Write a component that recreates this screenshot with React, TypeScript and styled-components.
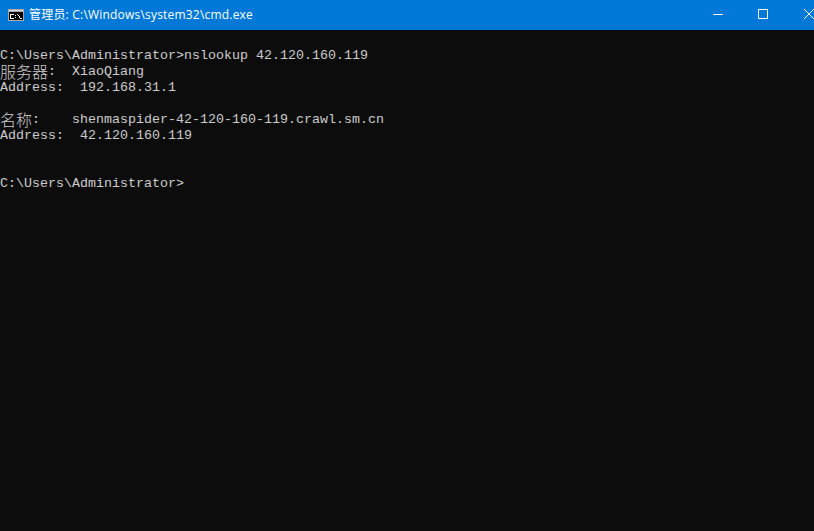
import { FC } from "react";
import styled, { createGlobalStyle } from "styled-components";

const GlobalStyle = createGlobalStyle`
  html, body {
    margin: 0;
    padding: 0;
    background: #0c0c0c;
  }
`;

const Window = styled.div`
  display: flex;
  flex-direction: column;
  width: 814px;
  height: 531px;
  overflow: hidden;
  background: #0c0c0c;
`;

const TitleBar = styled.div`
  display: flex;
  align-items: center;
  flex: 0 0 30px;
  height: 30px;
  background: #0078d7;
  color: #fff;
`;

const AppIcon = styled.svg`
  flex: 0 0 16px;
  margin-left: 8px;
`;

const Title = styled.div`
  flex: 1;
  margin-left: 5px;
  font-family: "Open Sans", "Noto Sans CJK SC", sans-serif;
  font-size: 12px;
  letter-spacing: 0.2px;
  line-height: 30px;
  white-space: nowrap;
`;

const Controls = styled.div`
  display: flex;
  flex: 0 0 136px;
  margin-right: -18px;
`;

const WindowButton = styled.div<{ $inset?: number }>`
  display: flex;
  align-items: center;
  box-sizing: border-box;
  width: 45px;
  height: 30px;
  padding-left: ${({ $inset }) => $inset ?? 17}px;
  padding-bottom: 2px;
`;

const Console = styled.pre`
  flex: 1;
  margin: 0;
  padding-top: 2px;
  color: #cccccc;
  font-family: "Liberation Mono", monospace;
  font-size: 13.33px;
`;

const Line = styled.div`
  display: flex;
  height: 16px;
  line-height: 16px;
  white-space: pre;
`;

const Cjk = styled.span`
  margin-top: -1px;
  font-family: "Noto Sans CJK SC", sans-serif;
  font-size: 16px;
  font-weight: 300;
  line-height: 16px;
`;

const App: FC = () => (
  <Window>
    <GlobalStyle />
    <TitleBar>
      <AppIcon width="16" height="12" viewBox="0 0 16 12" shapeRendering="crispEdges">
        <rect width="16" height="12" fill="#a8a8a8" />
        <rect x="1" y="1" width="14" height="1" fill="#d8d8d8" />
        <rect x="1" y="3" width="14" height="8" fill="#000" />
        <path
          d="M3 5h3v1H3v3h3v1H3a1 1 0 0 1-1-1V6a1 1 0 0 1 1-1zM7 6h1v1H7zM7 8h1v1H7zM9 5h1v1H9zM10 6h1v1h-1zM11 7h1v2h-1zM12 9h2v1h-2z"
          fill="#fff"
        />
      </AppIcon>
      <Title>管理员: C:\Windows\system32\cmd.exe</Title>
      <Controls>
        <WindowButton>
          <svg width="10" height="10" viewBox="0 0 10 10">
            <path d="M0 5.5h10" stroke="#fff" />
          </svg>
        </WindowButton>
        <WindowButton>
          <svg width="10" height="10" viewBox="0 0 10 10">
            <rect x="0.5" y="0.5" width="9" height="9" fill="none" stroke="#fff" />
          </svg>
        </WindowButton>
        <WindowButton $inset={18}>
          <svg width="10" height="10" viewBox="0 0 10 10">
            <path d="M0 0l10 10M10 0L0 10" stroke="#fff" />
          </svg>
        </WindowButton>
      </Controls>
    </TitleBar>
    <Console>
      <Line> </Line>
      <Line>C:\Users\Administrator&gt;nslookup 42.120.160.119</Line>
      <Line>
        <Cjk>服务器</Cjk>
        {":  XiaoQiang"}
      </Line>
      <Line>Address:  192.168.31.1</Line>
      <Line> </Line>
      <Line>
        <Cjk>名称</Cjk>
        {":    shenmaspider-42-120-160-119.crawl.sm.cn"}
      </Line>
      <Line>Address:  42.120.160.119</Line>
      <Line> </Line>
      <Line> </Line>
      <Line>C:\Users\Administrator&gt;</Line>
    </Console>
  </Window>
);

export default App;
